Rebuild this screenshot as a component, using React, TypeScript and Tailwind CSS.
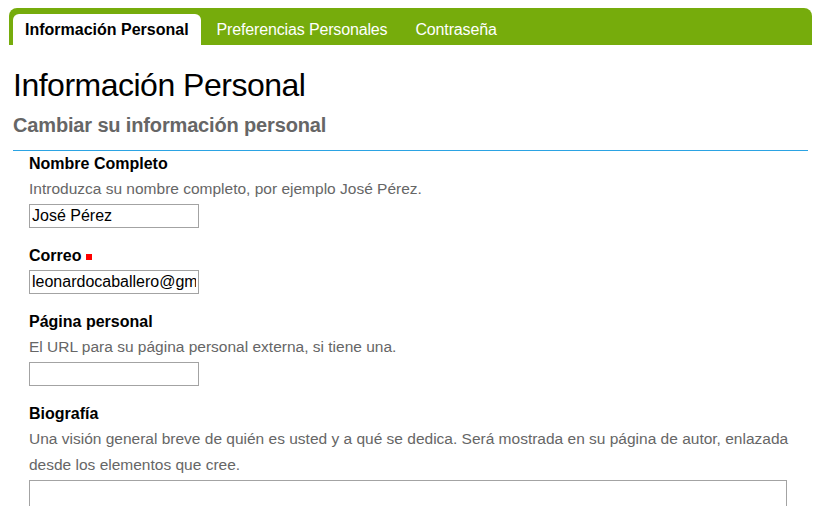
import React from "react";

const tabs = [
  { label: "Información Personal", active: true },
  { label: "Preferencias Personales", active: false },
  { label: "Contraseña", active: false },
];

function Label({ children, required = false }: { children: React.ReactNode; required?: boolean }) {
  return (
    <div className="text-[16px] leading-[24px] font-bold text-black">
      {children}
      {required && <span className="ml-[5px] inline-block h-[6px] w-[6px] bg-[#ff0000] align-[1px]" />}
    </div>
  );
}

function Help({ children }: { children: React.ReactNode }) {
  return <div className="text-[15.5px] leading-[26px] text-[#666666]">{children}</div>;
}

function TextInput({ value = "" }: { value?: string }) {
  return (
    <input
      type="text"
      defaultValue={value}
      className="mt-[2px] block h-[24px] w-[170px] border border-[#a3a3a3] bg-white px-[2px] text-[16px] text-black outline-none"
    />
  );
}

export default function App() {
  return (
    <div className="h-[506px] w-full overflow-hidden bg-white pt-[8px] font-['Liberation_Sans',Arial,sans-serif]">
      {/* tab bar */}
      <div className="ml-[9px] mr-[10px] flex h-[37px] items-end gap-1 rounded-t-[8px] bg-[#76ac0c] pl-[4px]">
        {tabs.map((t) =>
          t.active ? (
            <div key={t.label} className="h-[31px] rounded-t-[6px] bg-white px-3 text-[16px] leading-[31px] font-bold text-black">
              {t.label}
            </div>
          ) : (
            <div key={t.label} className="h-[31px] px-3 text-[16px] leading-[31px] tracking-[-0.15px] text-white">
              {t.label}
            </div>
          )
        )}
      </div>

      <div className="pl-[13px] pr-[14px]">
        <h1 className="mt-[21px] text-[32px] leading-[38px] font-normal tracking-[-0.5px] text-black">Información Personal</h1>
        <h2 className="mt-[9px] text-[20px] leading-[24px] font-bold tracking-[-0.15px] text-[#666666]">
          Cambiar su información personal
        </h2>
        <div className="mt-[13px] h-px bg-[#2ba3e3]" />

        <div className="pl-[16px] pt-[1px]">
          <div>
            <Label>Nombre Completo</Label>
            <Help>Introduzca su nombre completo, por ejemplo José Pérez.</Help>
            <TextInput value="José Pérez" />
          </div>

          <div className="mt-[16px]">
            <Label required>Correo</Label>
            <TextInput value="leonardocaballero@gmail.com" />
          </div>

          <div className="mt-[16px]">
            <Label>Página personal</Label>
            <Help>El URL para su página personal externa, si tiene una.</Help>
            <TextInput />
          </div>

          <div className="mt-[16px]">
            <Label>Biografía</Label>
            <Help>
              Una visión general breve de quién es usted y a qué se dedica. Será mostrada en su página de autor, enlazada
              desde los elementos que cree.
            </Help>
            <textarea className="mt-[2px] block h-[100px] w-[758px] resize-none border border-[#a3a3a3] bg-white outline-none" />
          </div>
        </div>
      </div>
    </div>
  );
}
